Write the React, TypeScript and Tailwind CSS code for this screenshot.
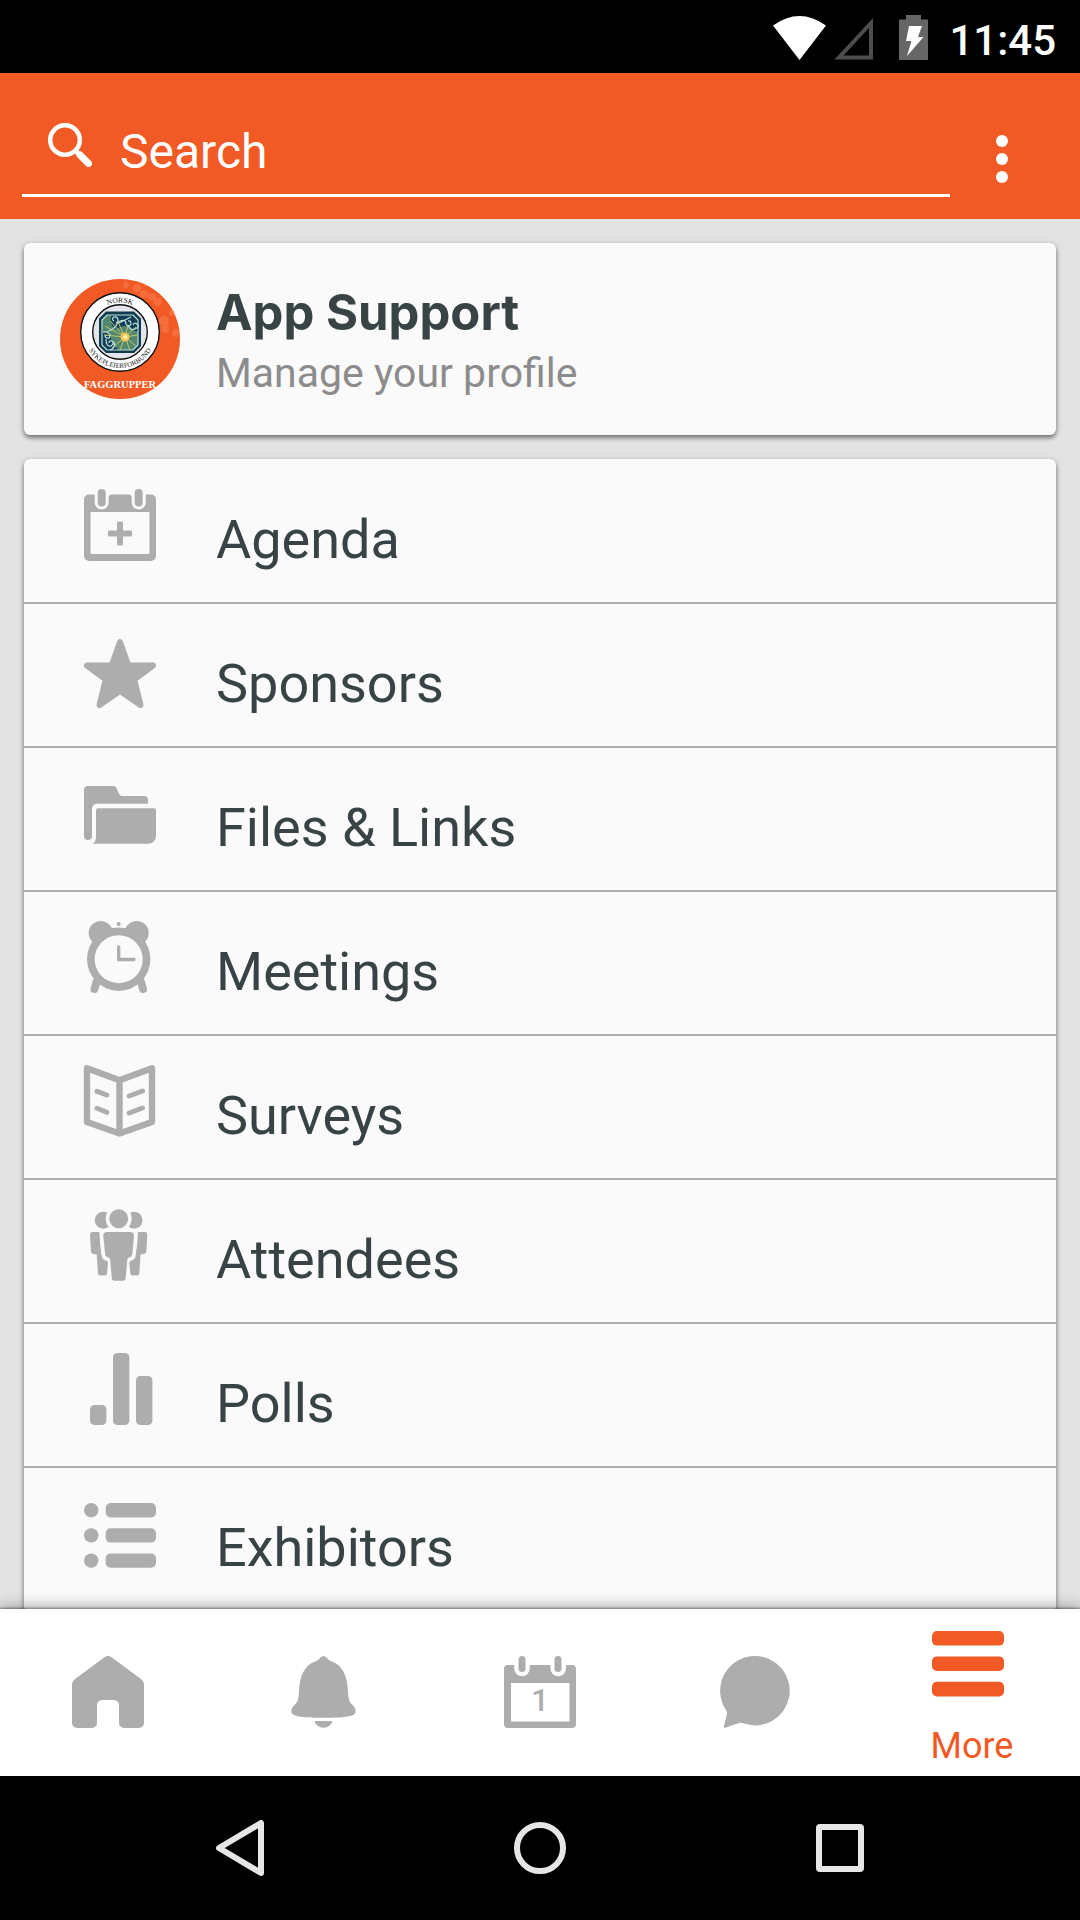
import type { ReactNode } from 'react';

interface MenuItem {
  label: string;
  icon: ReactNode;
}

interface IconProps {
  children: ReactNode;
}

function Icon({ children }: IconProps) {
  return (
    <svg
      viewBox="0 0 72 72"
      fill="currentColor"
      className="h-[72px] w-[72px] shrink-0 overflow-visible text-[#adadad]"
      aria-hidden="true"
    >
      {children}
    </svg>
  );
}

const menuItems: MenuItem[] = [
  {
    label: 'Agenda',
    icon: (
      <Icon>
        <path
          fillRule="evenodd"
          d="M5 5.5h5.7v8a7 7 0 0 0 14 0v-5q0-3 3-3h17q3 0 3 3v5a7 7 0 0 0 14 0v-8H67a5 5 0 0 1 5 5V67a5 5 0 0 1-5 5H5a5 5 0 0 1-5-5V10.500a5 5 0 0 1 5-5zM7.500 23q-1 0-1 1v40q0 1 1 1h57q1 0 1-1V24q0-1-1-1z"
        />
        <rect x="13.700" y="0" width="8" height="17.500" rx="4" />
        <rect x="50.700" y="0" width="8" height="17.500" rx="4" />
        <rect x="24" y="41.500" width="24" height="6" rx="1.500" />
        <rect x="33" y="32.500" width="6" height="24" rx="1.500" />
      </Icon>
    ),
  },
  {
    label: 'Sponsors',
    icon: (
      <Icon>
        <path
          d="M36 9l7.500 21.500q.7 2 2.800 2H69L52 45.200q-2 1.500-1.200 3.800L56.500 72 38 59.200q-2-1.400-4 0L15.500 72l5.700-23q.8-2.300-1.200-3.800L3 32.500h22.700q2.100 0 2.800-2z"
          stroke="currentColor"
          strokeWidth="6"
          strokeLinejoin="round"
        />
      </Icon>
    ),
  },
  {
    label: 'Files & Links',
    icon: (
      <Icon>
        <path d="M4 9h25.500q2 0 3 2l2.500 6q1 2 3 2h22a4 4 0 0 1 4 4v3.700H13a5 5 0 0 0-5 5V59a4 4 0 0 1-8 0V13a4 4 0 0 1 4-4z" />
        <path d="M14 31.300h56q2 0 2 2V59a7.700 7.700 0 0 1-7.700 7.700H9q3-2.500 3-6V33.300q0-2 2-2z" />
      </Icon>
    ),
  },
  {
    label: 'Meetings',
    icon: (
      <Icon>
        <circle cx="16.700" cy="12" r="12" />
        <circle cx="52.700" cy="12" r="12" />
        <path d="M25 7h20v8H25z" />
        <circle cx="34.700" cy="38.200" r="31.700" />
        <circle cx="34.700" cy="38.200" r="24" fill="#fafafa" />
        <circle cx="34.700" cy="3" r="2" />
        <path
          d="M34.700 26v12.500H50"
          fill="none"
          stroke="currentColor"
          strokeWidth="3.300"
          strokeLinecap="round"
        />
        <path
          d="M12.500 61L10.500 68M57 61l2 7"
          stroke="currentColor"
          strokeWidth="8"
          strokeLinecap="round"
        />
      </Icon>
    ),
  },
  {
    label: 'Surveys',
    icon: (
      <Icon>
        <path
          d="M3 3.300l32.500 12L68 3.300V57L35.500 68.500 3 57zM35.500 15v53"
          fill="none"
          stroke="currentColor"
          strokeWidth="6.400"
          strokeLinejoin="round"
        />
        <path
          d="M13 26.300l9.800 3.700M13 43.300l9.800 4M45.200 31l13.300-5M45.200 48l13.300-5"
          fill="none"
          stroke="currentColor"
          strokeWidth="5"
          strokeLinecap="round"
        />
      </Icon>
    ),
  },
  {
    label: 'Attendees',
    icon: (
      <Icon>
        <circle cx="19.300" cy="11.300" r="8.500" />
        <circle cx="50" cy="11.300" r="8.500" />
        <circle cx="34.700" cy="9.700" r="11.200" stroke="#fafafa" strokeWidth="3.500" />
        <path d="M8 23h6.300q1.200 0 1.200 1.200L16 34l1.500 12q.5 4 3 5 3.500 1 3.500 3l-1 10.500q-.2 2-2 2h-5q-1.800 0-2-2l-1.300-19.300q-2.700 0-4-.5-1.400-.4-1.700-2L6 26q-.2-3 2-3z" />
        <path d="M61.300 23H55q-1.200 0-1.200 1.200L53.300 34l-1.500 12q-.5 4-3 5-3.500 1-3.500 3l1 10.500q.2 2 2 2h5q1.800 0 2-2l1.300-19.300q2.700 0 4-.5 1.400-.4 1.700-2L63.300 26q.2-3-2-3z" />
        <path d="M23 23h23.300q3.900 0 3.700 4l-1.700 18q-.3 3-2.800 3.200-2 .3-2.200 2.300l-1.600 18q-.2 3.200-3 3.200h-8q-2.800 0-3-3.200l-1.600-18q-.2-2-2.200-2.300-2.500-.2-2.800-3.200l-1.800-18q-.2-4 3.700-4z" />
      </Icon>
    ),
  },
  {
    label: 'Polls',
    icon: (
      <Icon>
        <rect x="6" y="52" width="16.400" height="20" rx="4.500" />
        <rect x="29" y="0" width="16.400" height="72" rx="4.500" />
        <rect x="52" y="23" width="16.400" height="49" rx="4.500" />
      </Icon>
    ),
  },
  {
    label: 'Exhibitors',
    icon: (
      <Icon>
        <circle cx="7.200" cy="13.200" r="7.200" />
        <circle cx="7.200" cy="38.400" r="7.200" />
        <circle cx="7.200" cy="63.600" r="7.200" />
        <rect x="21.700" y="6" width="50.300" height="14.400" rx="5" />
        <rect x="21.700" y="31.200" width="50.300" height="14.400" rx="5" />
        <rect x="21.700" y="56.400" width="50.300" height="14.400" rx="5" />
      </Icon>
    ),
  },
];

const tabs: MenuItem[] = [
  {
    label: 'Home',
    icon: (
      <Icon>
        <path d="M32.500 1.300q3.500-2.500 7 0L69 23q3 2.300 3 6v38a5 5 0 0 1-5 5H52a5 5 0 0 1-5-5V49a5 5 0 0 0-5-5H30a5 5 0 0 0-5 5v18a5 5 0 0 1-5 5H5a5 5 0 0 1-5-5V29q0-3.700 3-6z" />
      </Icon>
    ),
  },
  {
    label: 'Notifications',
    icon: (
      <Icon>
        <path d="M32.500 1.500q3-3 6 0C41 4.500 41.500 4.500 44 5.500 55 9.500 59.500 21 60 35c.3 7 1 11 4 13.500 4 3.500 4.500 7.500 2.500 9.500-3 3.500-20 3.800-31 3.800S7.500 61.500 4.500 58c-2-2-1.500-6 2.500-9.500 3-2.500 3.700-6.500 4-13.500.5-14 5-25.500 16-29.500 2.500-1 3-1 5.500-4z" />
        <path d="M28 65h15q2.200 0 1 1.700-3.500 5-8.500 5t-8.500-5Q25.800 65 28 65z" />
      </Icon>
    ),
  },
  {
    label: 'Calendar',
    icon: (
      <Icon>
        <path
          fillRule="evenodd"
          d="M4 9h6.200v3.300a7.800 8 0 0 0 15.600 0V9h20.600v3.300a7.800 8 0 0 0 15.600 0V9h6a4 4 0 0 1 4 4v55a4 4 0 0 1-4 4H4a4 4 0 0 1-4-4V13a4 4 0 0 1 4-4zM7 27v38.500h58.500V27z"
        />
        <rect x="14.500" y="0" width="7" height="16" rx="3.500" />
        <rect x="50.500" y="0" width="7" height="16" rx="3.500" />
        <text x="36" y="55" textAnchor="middle" fontSize="31" className="font-['Roboto',sans-serif] font-medium">
          1
        </text>
      </Icon>
    ),
  },
  {
    label: 'Messages',
    icon: (
      <Icon>
        <path d="M35 0a34.700 34.700 0 1 1-11 67.600q-2.800-1.200-5-.6L6 71.500q-2.500.8-2-1.500l2.700-11q.8-3-.7-5A34.700 34.700 0 0 1 35 0z" />
      </Icon>
    ),
  },
];

function StatusBar() {
  return (
    <div className="flex h-[73px] shrink-0 items-start justify-end bg-black pr-6 text-white">
      <svg viewBox="0 0 160 46" className="mt-[15px] mr-4 h-[46px] w-40" aria-hidden="true">
        <path d="M0 10.500Q26.500-8.500 53 10.500L26.500 45z" fill="#fff" />
        <path d="M98 8v34.500H66z" fill="none" stroke="#4d4d4d" strokeWidth="4" />
        <path d="M126 4.500h7V0h15v4.500h7V45h-29z" fill="#666" />
        <path d="M136 11h13l-4 11h5.500L134 41l4.500-15H133z" fill="#fff" />
      </svg>
      <span className="pt-[17px] text-[42px] leading-[48px] font-medium">11:45</span>
    </div>
  );
}

function SearchBar() {
  return (
    <header className="flex h-[146px] shrink-0 bg-[#f15a24] pl-[22px] text-white">
      <label className="mb-[22px] flex flex-1 items-start border-b-3 border-white pl-[26px]">
        <svg viewBox="0 0 44 44" className="mt-[50px] h-11 w-11 shrink-0" fill="none" stroke="currentColor" aria-hidden="true">
          <circle cx="17" cy="17" r="14.800" strokeWidth="4.500" />
          <path d="M28 28l4 4" strokeWidth="5" />
          <path d="M32 32l8.500 8.500" strokeWidth="7" strokeLinecap="round" />
        </svg>
        <input
          type="text"
          placeholder="Search"
          aria-label="Search"
          className="mt-[47px] ml-7 h-16 min-w-0 flex-1 bg-transparent text-[48px] outline-none placeholder:text-white"
        />
      </label>
      <button type="button" aria-label="More options" className="mr-[26px] flex w-[104px] flex-col items-center gap-[6px] pt-[62px]">
        <span className="h-3 w-3 rounded-full bg-white" />
        <span className="h-3 w-3 rounded-full bg-white" />
        <span className="h-3 w-3 rounded-full bg-white" />
      </button>
    </header>
  );
}

function Avatar() {
  return (
    <svg viewBox="0 0 120 120" className="h-[120px] w-[120px] shrink-0" role="img" aria-label="Norsk Sykepleierforbund">
      <defs>
        <clipPath id="octagon">
          <path d="M46 32.500h28l7 7V67l-7 7H46l-7-7V39.500z" />
        </clipPath>
        <path id="arc-top" d="M30.500 53a29.500 29.500 0 0 1 59 0" />
        <path id="arc-bottom" d="M24 53a36 36 0 0 0 72 0" />
      </defs>
      <circle cx="60" cy="60" r="60" fill="#f15a24" />
      <g fill="#ff9a72" opacity="0.3">
        <circle cx="77" cy="9" r="4" />
        <circle cx="84" cy="15" r="4" />
        <circle cx="92" cy="18" r="4" />
        <circle cx="98" cy="23" r="4" />
        <circle cx="66" cy="6" r="3" />
        <circle cx="104" cy="42" r="5" />
        <circle cx="105" cy="50" r="4" />
        <circle cx="112" cy="34" r="3" />
        <circle cx="116" cy="54" r="4" />
      </g>
      <circle cx="60" cy="53" r="39.300" fill="#fff" stroke="#111" strokeWidth="1.400" />
      <circle cx="60" cy="53" r="27.300" fill="#e4e4ec" stroke="#111" strokeWidth="1.400" />
      <g clipPath="url(#octagon)">
        <rect x="38" y="31" width="44" height="44" fill="#0f3b4c" />
        <path d="M47 36h26l5 5v25l-5 5H47l-5-5V41z" fill="#53876d" />
        <path d="M51 36h22l5 5v12q-7-2-9-7-11 2-13 4-7-3-5-14z" fill="#123f55" />
        <path d="M42 50q9 4 9 10t8 11H47l-5-5z" fill="#123f55" />
        <path
          d="M65 58L45 47M65 58L44 56M65 58L52 69M65 58L60 71M65 58L70 71M65 58L77 68M65 58L77 56M65 58L76 48M65 58L68 46M65 58L58 43M65 58L50 42"
          stroke="#bfc66c"
          strokeWidth="1"
        />
        <g fill="none" stroke="#bfe0dc" strokeWidth="1.200">
          <path d="M43 53q13-1 15-11 0-5-4-4-3 2 0 4M56 44q10-6 10 1 3 4 5 0 0-4-3-3M71 38l-12 6M68 46q2 6 7 4t2-5q-3-2-4 1M43 52q5 1 7 4 0 4-3 3t-1-3M46 60q0 8 5 7 4-3 1-5-3-1-3 2M54 63q2 6-4 8" />
          <path d="M47 36h26l5 5v25l-5 5H47l-5-5V41z" />
        </g>
        <circle cx="65" cy="58" r="4.500" fill="#f7c353" />
        <circle cx="65.500" cy="58" r="2.300" fill="#fff0a8" />
      </g>
      <g fill="#222" fontSize="7.500" textAnchor="middle" className="font-['Liberation_Serif',serif]">
        <text>
          <textPath href="#arc-top" startOffset="50%">NORSK</textPath>
        </text>
        <text fontSize="7">
          <textPath href="#arc-bottom" startOffset="50%">SYKEPLEIERFORBUND</textPath>
        </text>
      </g>
      <text x="60" y="109" fontSize="10.500" fill="#fff" textAnchor="middle" className="font-['Liberation_Serif',serif] font-bold">
        FAGGRUPPER
      </text>
    </svg>
  );
}

function ProfileCard() {
  return (
    <a
      href="#profile"
      className="flex h-48 shrink-0 items-center gap-9 rounded-md bg-[#fafafa] pl-9 shadow-[0_3px_4px_rgba(0,0,0,0.4),0_1px_6px_rgba(0,0,0,0.2)]"
    >
      <Avatar />
      <span className="flex flex-col pt-2">
        <span className="font-['Inter',sans-serif] text-[49px] leading-[60px] font-bold text-[#374345]">App Support</span>
        <span className="text-[41px] leading-[60px] text-[#8c8c8c]">Manage your profile</span>
      </span>
    </a>
  );
}

function MenuList() {
  return (
    <ul className="shrink-0 rounded-md bg-[#fafafa] pt-px shadow-[0_3px_4px_rgba(0,0,0,0.4),0_1px_6px_rgba(0,0,0,0.2)]">
      {menuItems.map((item) => (
        <li key={item.label} className="h-36 border-b-2 border-[#adadad]">
          <a href={`#${item.label.toLowerCase()}`} className="flex items-start gap-[60px] pt-[29px] pl-[60px]">
            {item.icon}
            <span className="pt-[21px] text-[54px] leading-[60px] text-[#374345]">{item.label}</span>
          </a>
        </li>
      ))}
    </ul>
  );
}

function TabBar() {
  return (
    <nav className="relative grid h-[167px] shrink-0 grid-cols-5 bg-white shadow-[0_-1px_2px_rgba(0,0,0,0.4),0_-2px_14px_rgba(0,0,0,0.35)]">
      {tabs.map((tab) => (
        <button key={tab.label} type="button" aria-label={tab.label} className="flex items-center justify-center pb-px">
          {tab.icon}
        </button>
      ))}
      <button type="button" className="flex flex-col items-center gap-[29px] pt-[22px] text-[#f15a24]">
        <svg viewBox="0 0 80 66" className="h-[66px] w-20" fill="currentColor" aria-hidden="true">
          <rect y="0" width="72" height="14.600" rx="5" />
          <rect y="25.400" width="72" height="14.600" rx="5" />
          <rect y="50.800" width="72" height="14.600" rx="5" />
        </svg>
        <span className="text-[36px] leading-[40px]">More</span>
      </button>
    </nav>
  );
}

function SystemNav() {
  return (
    <div className="grid h-36 shrink-0 grid-cols-3 bg-black px-[90px] text-[#e6e6e6]">
      <button type="button" aria-label="Back" className="flex items-center justify-center">
        <svg viewBox="0 0 50 58" className="h-[58px] w-[50px]" fill="none" stroke="currentColor" strokeWidth="6" strokeLinejoin="round">
          <path d="M46 4v50L4 29z" />
        </svg>
      </button>
      <button type="button" aria-label="Home" className="flex items-center justify-center">
        <span className="h-[52px] w-[52px] rounded-full border-6 border-current" />
      </button>
      <button type="button" aria-label="Recent apps" className="flex items-center justify-center">
        <span className="h-12 w-12 rounded-sm border-6 border-current" />
      </button>
    </div>
  );
}

export default function App() {
  return (
    <div className="flex h-screen flex-col bg-[#e3e3e3] font-['Roboto',sans-serif]">
      <StatusBar />
      <SearchBar />
      <main className="flex min-h-0 flex-1 flex-col gap-6 overflow-hidden p-6 pb-0">
        <ProfileCard />
        <MenuList />
      </main>
      <TabBar />
      <SystemNav />
    </div>
  );
}
